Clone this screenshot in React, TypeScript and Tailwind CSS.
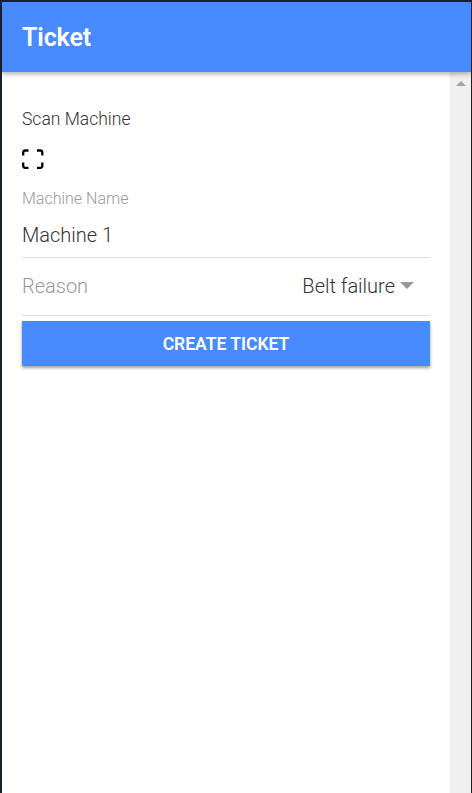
export default function App() {
  return (
    <div className="flex h-[793px] w-[472px] flex-col overflow-hidden border-t-2 border-r border-l-2 border-t-[#1e1f24] border-r-[#1e1f24] border-l-[#181e2a] bg-white font-['Roboto','Liberation_Sans',sans-serif] font-light text-[#333]">
      <header className="relative z-10 flex h-[70px] shrink-0 items-center bg-[#488aff] px-5 pt-[2px] shadow-[0_2px_5px_rgba(0,0,0,0.32)]">
        <h1 className="text-[25px] font-semibold tracking-[-0.1px] text-white">Ticket</h1>
      </header>
      <div className="flex min-h-0 flex-1">
        <main className="flex-1 px-5 pt-[36px]">
          <p className="text-[17.5px] leading-[22px]">Scan Machine</p>
          <svg className="mt-[19px] block h-[20px] w-[22px]" viewBox="0 0 22 20" fill="none" stroke="#000" strokeWidth="2.3">
            <path d="M1.200 6.500V3.500q0-2 2-2h3.300M15 1.500h3.300q2 0 2 2v3M20.300 13.500v3.300q0 2-2 2H15M6.500 18.800H3.200q-2 0-2-2v-3.300" />
          </svg>
          <div className="mt-[19px] h-[70px] border-b border-[#dedede] pt-px">
            <label className="block text-[16px] leading-[20px] text-[#999]">Machine Name</label>
            <div className="mt-[13px] text-[20px] leading-[26px]">Machine 1</div>
          </div>
          <div className="flex h-[58px] items-center justify-between border-b border-[#dedede] pr-4 pb-[2px] text-[20px]">
            <span className="text-[#999]">Reason</span>
            <span className="flex items-center gap-[5px]">Belt failure<i className="h-0 w-0 border-x-[6.500px] border-t-[6.500px] border-x-[7px] border-t-[7px] border-x-transparent border-t-[#999]" /></span>
          </div>
          <button className="mt-[5px] flex h-[45px] w-full items-center justify-center bg-[#488aff] pt-px text-[17.5px] font-semibold text-white shadow-[0_2px_3px_rgba(0,0,0,0.38)]">CREATE TICKET</button>
        </main>
        <aside className="flex w-[21px] shrink-0 justify-center bg-[#f0f0f0] pt-[9px]">
          <i className="h-0 w-0 border-x-[5px] border-b-[5px] border-x-transparent border-b-[#a3a3a3]" />
        </aside>
      </div>
    </div>
  );
}
